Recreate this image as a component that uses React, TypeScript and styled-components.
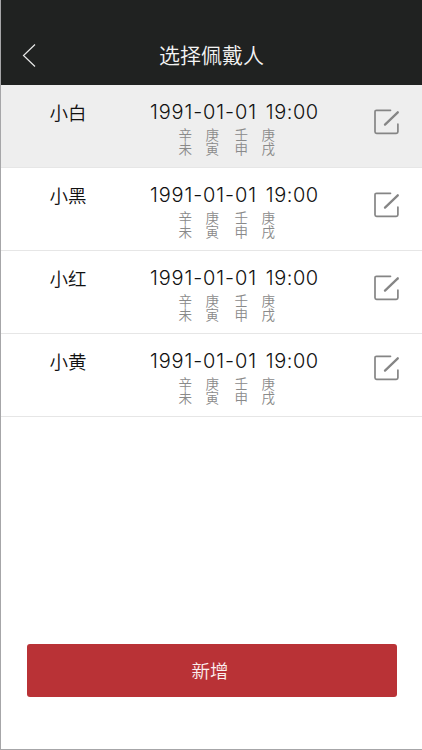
import React from "react";
import styled, { createGlobalStyle } from "styled-components";

const GlobalStyle = createGlobalStyle`
  * { box-sizing: border-box; }
  body { margin: 0; background: #fff; }
`;

const Screen = styled.main`
  display: flex;
  flex-direction: column;
  width: 422px;
  height: 750px;
  overflow: hidden;
  background: #fff;
  border: solid #a6a6a8;
  border-width: 0 0 1px 1px;
  font-family: "Noto Sans CJK SC", sans-serif;
  font-weight: 300;
`;

const Header = styled.header`
  display: grid;
  grid-template-columns: 56px 1fr 56px;
  align-items: center;
  flex: none;
  height: 85px;
  padding-top: 24px;
  background: #202221;
  color: #f4f4f4;
`;

const BackButton = styled.button`
  display: flex;
  height: 60px;
  padding: 19px 0 0 21px;
  border: 0;
  background: none;
  color: #e8e8e8;
`;

const Title = styled.h1`
  margin: 0;
  font-size: 21px;
  font-weight: 350;
  line-height: 59px;
  text-align: center;
`;

const List = styled.ul`
  display: grid;
  grid-template-rows: repeat(4, 83px);
  flex: none;
  margin: 0;
  padding: 0;
  list-style: none;
`;

const Row = styled.li<{ $selected?: boolean }>`
  display: grid;
  grid-template-columns: 139px 190px 1fr;
  border-bottom: 1px solid #e6e6e6;
  background: ${(p) => (p.$selected ? "#eeeeee" : "#ffffff")};
`;

const Name = styled.div`
  padding: 12.5px 0 0 48.5px;
  color: #111;
  font-size: 18.5px;
  font-weight: 350;
  line-height: 28px;
`;

const Birth = styled.div`
  padding: 14px 0 0 10px;
`;

const DateTime = styled.div`
  display: flex;
  gap: 9px;
  color: #111;
  font-family: Inter, "Liberation Sans", sans-serif;
  font-size: 20px;
  font-weight: 300;
  line-height: 27px;
  white-space: nowrap;
`;

const DatePart = styled.span`
  letter-spacing: 0.85px;
`;

const TimePart = styled.span`
  letter-spacing: 0.5px;
`;

const Pillars = styled.div`
  display: grid;
  grid-template-columns: 27px 29px 27px 14px;
  margin: 2px 0 0 28.5px;
  color: #8a8a8a;
  font-size: 13.5px;
  font-weight: 350;
  line-height: 13.5px;
`;

const Pillar = styled.div`
  width: 14px;
  line-break: anywhere;
`;

const EditButton = styled.button<{ $top: number }>`
  display: flex;
  align-self: start;
  padding: ${(p) => p.$top}px 0 0 44px;
  border: 0;
  background: none;
  color: #858585;
`;

const Footer = styled.footer`
  display: flex;
  margin-top: auto;
  padding: 0 25px 52px 26px;
`;

const AddButton = styled.button`
  flex: 1;
  height: 53px;
  padding: 0 4px 2px 0;
  border: 0;
  border-radius: 3px;
  background: #b93236;
  color: #fbeeee;
  font-family: inherit;
  font-size: 18.5px;
  font-weight: 350;
`;

const people = [
  { name: "小白", iconTop: 24, selected: true },
  { name: "小黑", iconTop: 24, selected: false },
  { name: "小红", iconTop: 24, selected: false },
  { name: "小黄", iconTop: 21, selected: false },
];

const pillars = ["辛未", "庚寅", "壬申", "庚戌"];

const EditIcon = () => (
  <svg width="26" height="26" viewBox="0 0 26 26" fill="none" stroke="currentColor" strokeLinecap="round">
    <path d="M16.5 1.3H2.6Q1 1.3 1 2.9V22.7Q1 24.3 2.6 24.3H22.3Q23.9 24.3 23.9 22.7V15.2" strokeWidth="1.7" />
    <path d="M23.8 3.3L11 15.6" strokeWidth="2.3" />
  </svg>
);

export default function App() {
  return (
    <>
      <GlobalStyle />
      <Screen>
        <Header>
          <BackButton aria-label="返回">
            <svg width="14" height="24" viewBox="0 0 14 24" fill="none" stroke="currentColor" strokeWidth="1.2">
              <path d="M13 0.5L1.5 11.5L13 22.5" />
            </svg>
          </BackButton>
          <Title>选择佩戴人</Title>
        </Header>
        <List>
          {people.map((person) => (
            <Row key={person.name} $selected={person.selected}>
              <Name>{person.name}</Name>
              <Birth>
                <DateTime>
                  <DatePart>1991-01-01</DatePart>
                  <TimePart>19:00</TimePart>
                </DateTime>
                <Pillars>
                  {pillars.map((pillar) => (
                    <Pillar key={pillar}>{pillar}</Pillar>
                  ))}
                </Pillars>
              </Birth>
              <EditButton $top={person.iconTop} aria-label="编辑">
                <EditIcon />
              </EditButton>
            </Row>
          ))}
        </List>
        <Footer>
          <AddButton>新增</AddButton>
        </Footer>
      </Screen>
    </>
  );
}
